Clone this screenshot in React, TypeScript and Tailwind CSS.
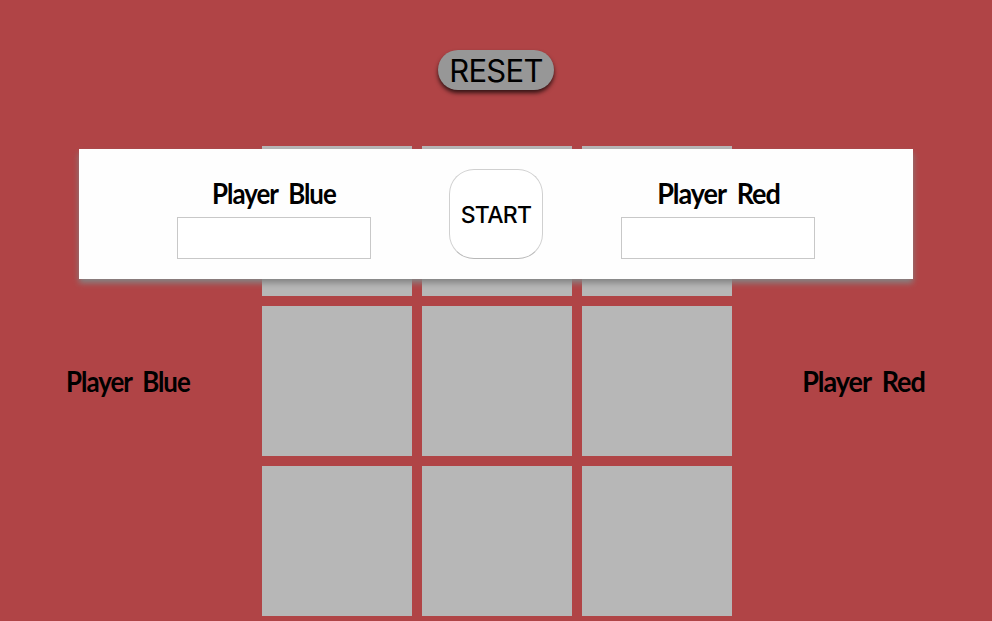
const cells = Array.from({ length: 9 }, (_, i) => i);

function PlayerName({ name, fit }: { name: string; fit: string }) {
  return (
    <span
      className={`block origin-center whitespace-nowrap font-['Lato',sans-serif] text-[28px] leading-8 font-bold tracking-[-1.1px] text-black [word-spacing:6px] ${fit}`}
    >
      {name}
    </span>
  );
}

function PlayerField({ name, fit }: { name: string; fit: string }) {
  return (
    <label className="mt-7 flex w-[194px] flex-col items-center">
      <PlayerName name={name} fit={fit} />
      <input
        type="text"
        aria-label={name}
        className="mt-2 h-[42px] w-[194px] border border-[#c8c8c8] bg-white px-2 outline-none"
      />
    </label>
  );
}

export default function App() {
  return (
    <main className="relative h-[621px] w-full overflow-hidden bg-[#b04446] font-['Inter',sans-serif] text-black">
      <header className="flex justify-center pt-[50px]">
        <button className="flex h-10 w-[116px] items-center justify-center rounded-[20px] bg-[#979797] pt-[2px] text-[31px] leading-10 tracking-[-0.7px] shadow-[0_3px_4px_rgba(0,0,0,0.7)]">
          RESET
        </button>
      </header>

      <section className="mt-14 flex">
        <aside className="flex h-[470px] w-[262px] items-center justify-center pr-[7px]">
          <PlayerName name="Player Blue" fit="scale-x-[0.925]" />
        </aside>
        <div className="grid w-[470px] shrink-0 grid-cols-3 gap-[10px]">
          {cells.map((cell) => (
            <div key={cell} className="h-[150px] bg-[#b7b7b7]" />
          ))}
        </div>
        <aside className="flex h-[470px] w-[260px] items-center justify-center pl-[3px]">
          <PlayerName name="Player Red" fit="scale-x-[0.965]" />
        </aside>
      </section>

      <div className="absolute top-[149px] left-[79px] flex h-[130px] w-[834px] items-start justify-center gap-[78px] bg-[#fefefe] shadow-[0_4px_6px_#848484]">
        <PlayerField name="Player Blue" fit="scale-x-[0.925]" />
        <button className="mt-5 flex h-[90px] w-[94px] items-center justify-center rounded-[25px] border border-[#d0d0d0] border-b-[#b8b8b8] bg-white pt-[2px] text-[23px] font-medium tracking-[-0.7px]">
          START
        </button>
        <PlayerField name="Player Red" fit="scale-x-[0.965]" />
      </div>
    </main>
  );
}
